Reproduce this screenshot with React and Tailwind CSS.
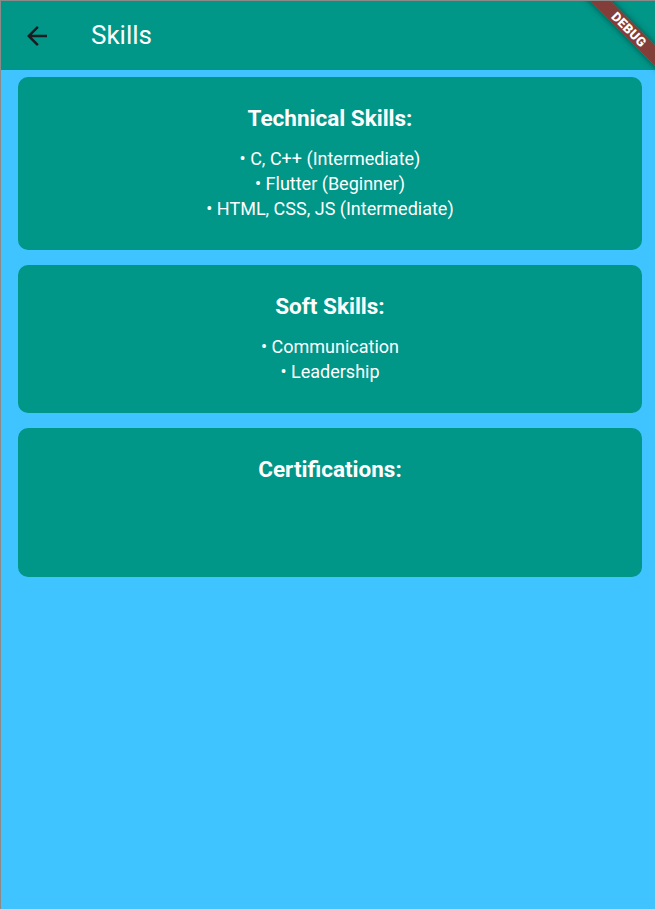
import React from 'react';

const sections = [
    { title: 'Technical Skills:', items: ['C, C++ (Intermediate)', 'Flutter (Beginner)', 'HTML, CSS, JS (Intermediate)'] },
    { title: 'Soft Skills:', items: ['Communication', 'Leadership'] },
    { title: 'Certifications:', items: [] },
];

const ArrowBack = () => (
    <svg width="30" height="30" viewBox="0 0 24 24" fill="#1d1b20">
        <path d="M20 11H7.83l5.59-5.59L12 4l-8 8 8 8 1.41-1.41L7.83 13H20v-2z" />
    </svg>
);

const SkillCard = ({ title, items }) => (
    <div className="bg-[#009688] rounded-[10px] pt-[28px] pb-[29px] flex flex-col items-center text-white">
        <h2 className="text-[22.5px] leading-[26px] font-bold mb-[15px]">{title}</h2>
        {items.length > 0 ? (
            <div className="flex flex-col items-center">
                {items.map((item) => (
                    <p key={item} className="text-[18px] leading-[25px]">• {item}</p>
                ))}
            </div>
        ) : (
            <div className="h-[51px]"></div>
        )}
    </div>
);

export default function App() {
    return (
        <div className="relative min-h-[909px] bg-[#40c4ff] border-l border-t border-[#8a8a8a] overflow-hidden font-['Roboto',sans-serif]">
            {/* App bar */}
            <div className="h-[69px] bg-[#009688] flex items-center pl-[21px]">
                <ArrowBack />
                <span className="ml-[39px] text-[26px] text-white leading-none -mt-[2px]">Skills</span>
            </div>

            {/* Cards */}
            <div className="ml-[17px] mr-[13px] mt-[7px] flex flex-col gap-[15px]">
                {sections.map((s) => (
                    <SkillCard key={s.title} title={s.title} items={s.items} />
                ))}
            </div>

            {/* Debug banner */}
            <div className="absolute top-[21px] left-[548px] w-[160px] h-[15px] rotate-45 bg-[#b71c1cb8] shadow-[0_0_6px_rgba(0,0,0,0.5)] flex items-center justify-center">
                <span className="text-white text-[13px] font-black leading-none tracking-[0.3px]">DEBUG</span>
            </div>
        </div>
    );
}
